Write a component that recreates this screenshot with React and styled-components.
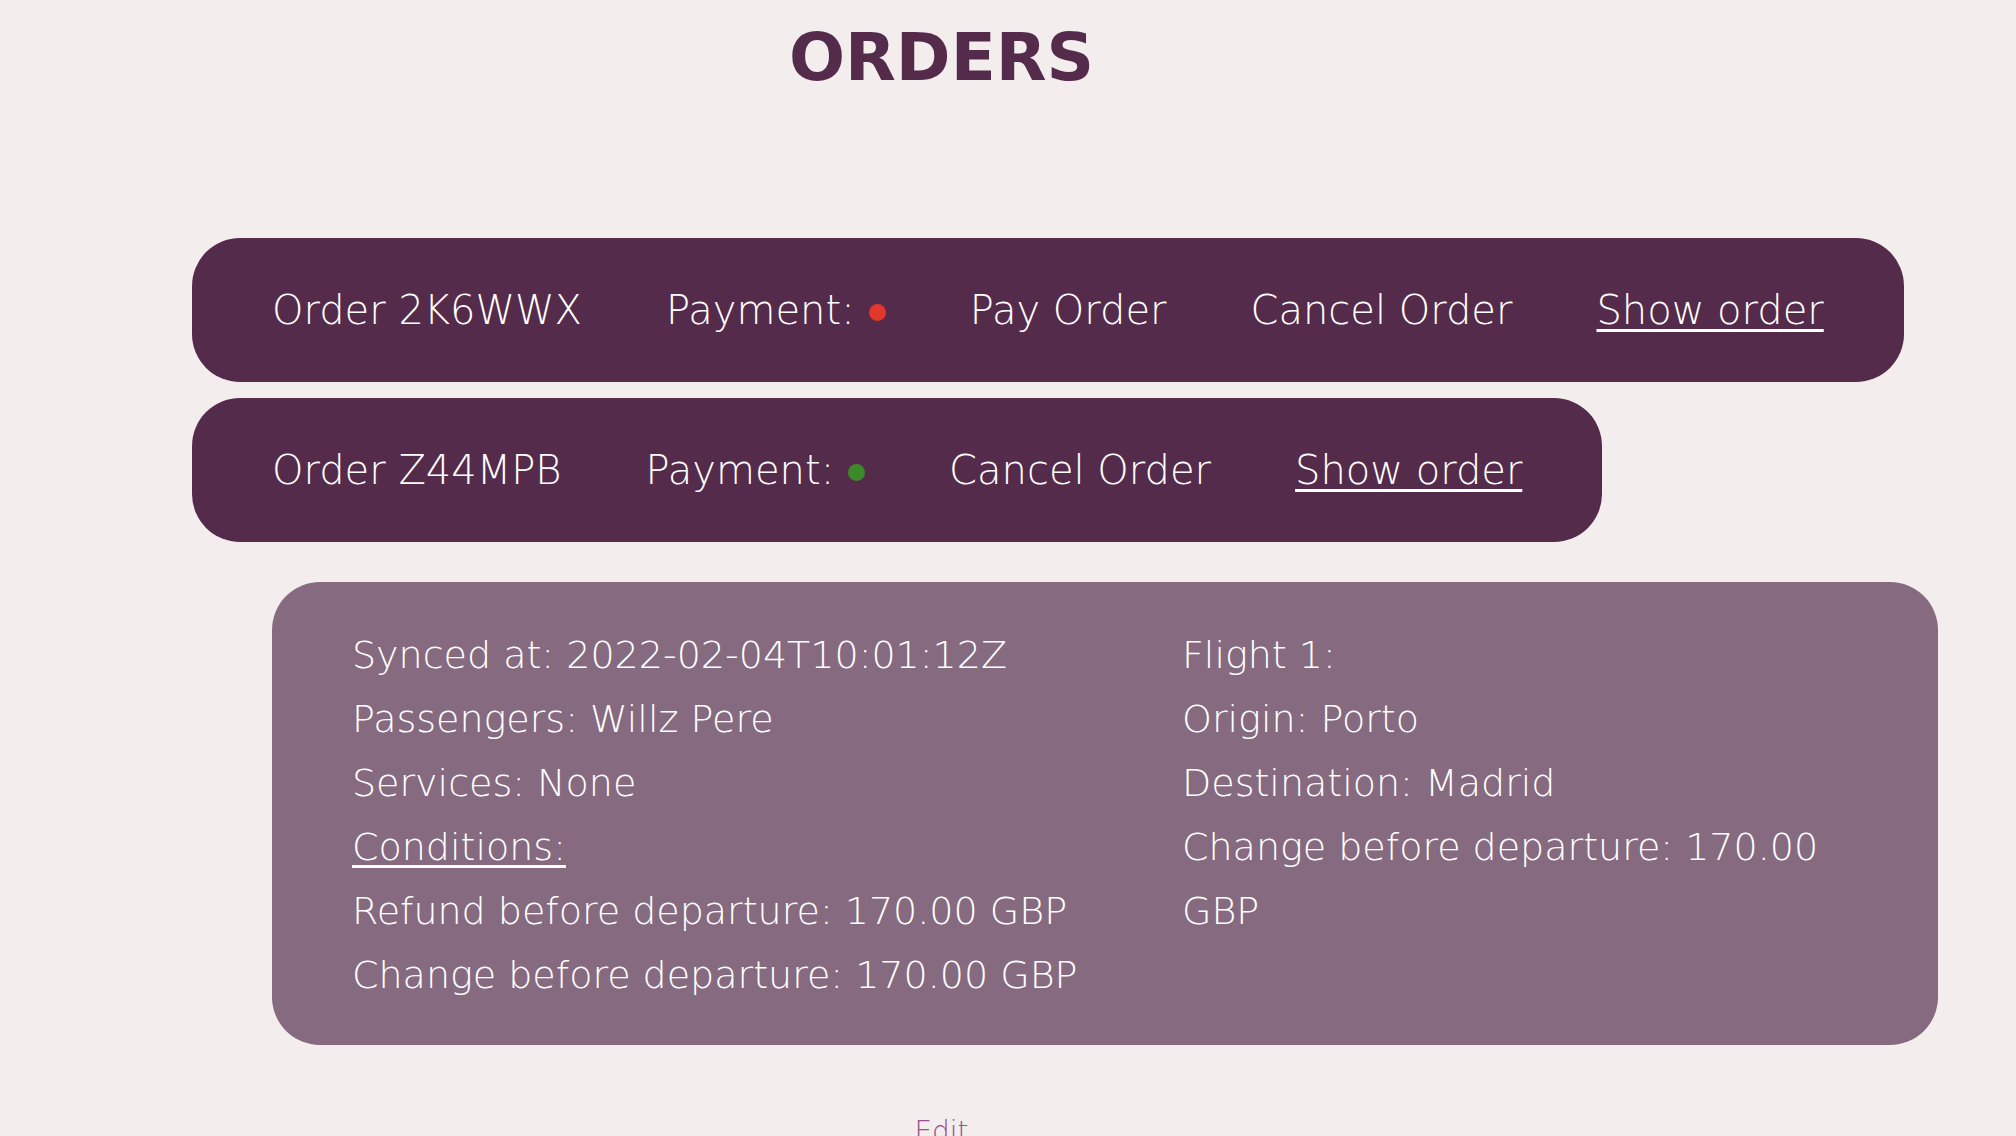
import React from "react";
import styled, { createGlobalStyle } from "styled-components";

const GlobalStyle = createGlobalStyle`
  html, body {
    margin: 0;
    padding: 0;
    background: #f3eded;
    font-family: "DejaVu Sans", "Open Sans", sans-serif;
  }
`;

const Page = styled.div`
  min-height: 1136px;
  overflow: hidden;
`;

const Title = styled.h1`
  width: 1883px;
  margin: 18px 0 0;
  text-align: center;
  font-size: 66px;
  font-weight: 700;
  line-height: 80px;
  color: #552b4b;
`;

const Main = styled.main`
  margin-top: 140px;
  padding-left: 192px;
`;

const OrderList = styled.div`
  display: flex;
  flex-direction: column;
  align-items: flex-start;
  gap: 16px;
`;

const OrderBar = styled.div`
  display: flex;
  align-items: center;
  gap: 84px;
  height: 144px;
  padding: 0 80px;
  box-sizing: border-box;
  border-radius: 48px;
  background: #552b4b;
  color: #ffffff;
  font-size: 40px;
  font-weight: 200;
  white-space: nowrap;
`;

const Item = styled.span`
  display: inline-flex;
  align-items: center;
  cursor: ${(p) => (p.$action ? "pointer" : "default")};
`;

const ShowLink = styled.a`
  color: #ffffff;
  text-decoration: underline;
  text-decoration-thickness: 3px;
  text-underline-offset: 5px;
  cursor: pointer;
`;

const Dot = styled.span`
  display: inline-block;
  width: 17px;
  height: 17px;
  margin-left: 14px;
  margin-top: 4px;
  border-radius: 50%;
  background: ${(p) => (p.$paid ? "#3d8a2b" : "#e2382b")};
`;

const Details = styled.section`
  display: grid;
  grid-template-columns: 750px 1fr;
  column-gap: 80px;
  width: 1666px;
  box-sizing: border-box;
  margin: 40px 0 0 80px;
  padding: 41px 80px 38px;
  border-radius: 48px;
  background: #866a80;
  color: #ffffff;
  font-size: 38px;
  font-weight: 200;
  line-height: 64px;
`;

const Column = styled.div`
  display: flex;
  flex-direction: column;
`;

const Line = styled.div`
  text-decoration: ${(p) => (p.$underline ? "underline" : "none")};
  text-decoration-thickness: 3px;
  text-underline-offset: 5px;
`;

const Edit = styled.div`
  width: 1883px;
  margin-top: 70px;
  text-align: center;
  font-size: 28px;
  font-weight: 200;
  color: #9a4f8f;
`;

const orders = [
  { id: "2K6WWX", paid: false },
  { id: "Z44MPB", paid: true },
];

export default function App() {
  return (
    <Page>
      <GlobalStyle />
      <Title>ORDERS</Title>
      <Main>
        <OrderList>
          {orders.map((o) => (
            <OrderBar key={o.id}>
              <Item>Order {o.id}</Item>
              <Item>
                Payment:
                <Dot $paid={o.paid} />
              </Item>
              {!o.paid && <Item $action>Pay Order</Item>}
              <Item $action>Cancel Order</Item>
              <Item>
                <ShowLink>Show order</ShowLink>
              </Item>
            </OrderBar>
          ))}
        </OrderList>
        <Details>
          <Column>
            <Line>Synced at: 2022-02-04T10:01:12Z</Line>
            <Line>Passengers: Willz Pere</Line>
            <Line>Services: None</Line>
            <Line $underline>Conditions:</Line>
            <Line>Refund before departure: 170.00 GBP</Line>
            <Line>Change before departure: 170.00 GBP</Line>
          </Column>
          <Column>
            <Line>Flight 1:</Line>
            <Line>Origin: Porto</Line>
            <Line>Destination: Madrid</Line>
            <Line>Change before departure: 170.00 GBP</Line>
          </Column>
        </Details>
      </Main>
      <Edit>Edit</Edit>
    </Page>
  );
}
